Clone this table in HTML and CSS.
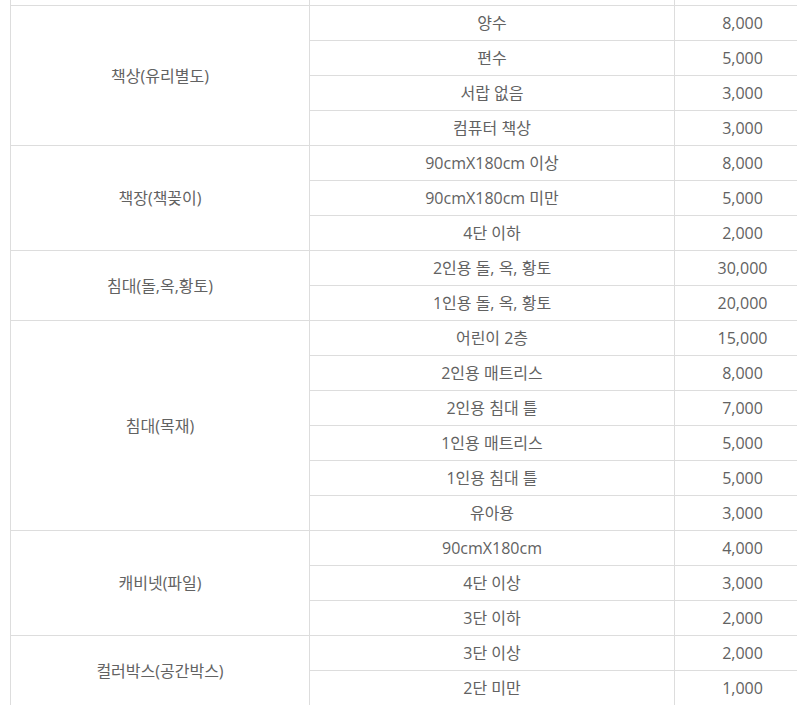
FILE: index.html
```html
<!DOCTYPE html>
<html lang="ko">
<head>
<meta charset="utf-8">
<link rel="stylesheet" href="styles.css">
</head>
<body>
<div class="wrap">
<table class="price">
  <colgroup><col class="c1"><col class="c2"><col class="c3"></colgroup>
  <tbody>
    <tr class="prev"><td></td><td></td><td></td></tr>
    <tr><td rowspan="4">책상(유리별도)</td><td>양수</td><td>8,000</td></tr>
    <tr><td>편수</td><td>5,000</td></tr>
    <tr><td>서랍 없음</td><td>3,000</td></tr>
    <tr><td>컴퓨터 책상</td><td>3,000</td></tr>
    <tr><td rowspan="3">책장(책꽂이)</td><td>90cmX180cm 이상</td><td>8,000</td></tr>
    <tr><td>90cmX180cm 미만</td><td>5,000</td></tr>
    <tr><td>4단 이하</td><td>2,000</td></tr>
    <tr><td rowspan="2">침대(돌,옥,황토)</td><td>2인용 돌, 옥, 황토</td><td>30,000</td></tr>
    <tr><td>1인용 돌, 옥, 황토</td><td>20,000</td></tr>
    <tr><td rowspan="6">침대(목재)</td><td>어린이 2층</td><td>15,000</td></tr>
    <tr><td>2인용 매트리스</td><td>8,000</td></tr>
    <tr><td>2인용 침대 틀</td><td>7,000</td></tr>
    <tr><td>1인용 매트리스</td><td>5,000</td></tr>
    <tr><td>1인용 침대 틀</td><td>5,000</td></tr>
    <tr><td>유아용</td><td>3,000</td></tr>
    <tr><td rowspan="3">캐비넷(파일)</td><td>90cmX180cm</td><td>4,000</td></tr>
    <tr><td>4단 이상</td><td>3,000</td></tr>
    <tr><td>3단 이하</td><td>2,000</td></tr>
    <tr><td rowspan="2">컬러박스(공간박스)</td><td>3단 이상</td><td>2,000</td></tr>
    <tr><td>2단 미만</td><td>1,000</td></tr>
  </tbody>
</table>
</div>
</body>
</html>
```
FILE: styles.css
```css
html, body {
  margin: 0;
  padding: 0;
  background: #fff;
  overflow: hidden;
}
.wrap {
  width: 797px;
  height: 705px;
  overflow: hidden;
}
.price {
  border-collapse: collapse;
  table-layout: fixed;
  width: 800px;
  margin: -30px 0 0 10px;
  font-family: "Open Sans", "Noto Sans CJK KR", sans-serif;
  font-size: 16px;
  color: #626262;
}
.c1 { width: 299px; }
.c2 { width: 365px; }
.c3 { width: 136px; }
.price td {
  border: 1px solid #ddd;
  height: 34px;
  padding: 0;
  text-align: center;
  vertical-align: middle;
  line-height: 20px;
}
```
